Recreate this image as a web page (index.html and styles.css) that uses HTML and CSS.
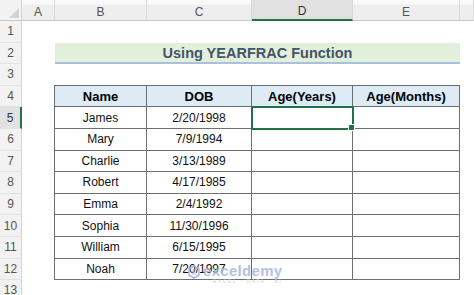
FILE: index.html
```html
<!DOCTYPE html>
<html>
<head>
<link rel="stylesheet" href="styles.css">
</head>
<body>
<div class="sheet">
    <div class="corner"><span class="tri"></span></div>
    <div class="colhead">A</div>
    <div class="colhead">B</div>
    <div class="colhead">C</div>
    <div class="colhead active">D</div>
    <div class="colhead">E</div>
    <div class="colhead"></div>

    <div class="rowhead r1">1</div>
    <div class="rowhead r2">2</div>
    <div class="rowhead r3">3</div>
    <div class="rowhead r4">4</div>
    <div class="rowhead r5 active">5</div>
    <div class="rowhead r6">6</div>
    <div class="rowhead r7">7</div>
    <div class="rowhead r8">8</div>
    <div class="rowhead r9">9</div>
    <div class="rowhead r10">10</div>
    <div class="rowhead r11">11</div>
    <div class="rowhead r12">12</div>
    <div class="rowhead r13">13</div>

    <div class="title">Using YEARFRAC Function</div>

    <div class="data">
        <div class="cell th">Name</div><div class="cell th">DOB</div><div class="cell th">Age(Years)</div><div class="cell th">Age(Months)</div>
        <div class="cell">James</div><div class="cell">2/20/1998</div><div class="cell sel"><span class="handle"></span></div><div class="cell"></div>
        <div class="cell">Mary</div><div class="cell">7/9/1994</div><div class="cell"></div><div class="cell"></div>
        <div class="cell">Charlie</div><div class="cell">3/13/1989</div><div class="cell"></div><div class="cell"></div>
        <div class="cell">Robert</div><div class="cell">4/17/1985</div><div class="cell"></div><div class="cell"></div>
        <div class="cell">Emma</div><div class="cell">2/4/1992</div><div class="cell"></div><div class="cell"></div>
        <div class="cell">Sophia</div><div class="cell">11/30/1996</div><div class="cell"></div><div class="cell"></div>
        <div class="cell">William</div><div class="cell">6/15/1995</div><div class="cell"></div><div class="cell"></div>
        <div class="cell">Noah</div><div class="cell">7/20/1997</div><div class="cell"></div><div class="cell"></div>
    </div>

    <div class="mark">
        <svg class="mark-icon" width="12" height="14" viewBox="0 0 12 14">
            <path d="M6 1 L11 4 L11 10 L6 13 L1 10 L1 4 Z" fill="none" stroke="#9fb4d6" stroke-width="1.6"/>
            <path d="M4 5 H8 M4 7 H7 M4 9 H8" stroke="#9fb4d6" stroke-width="1.2"/>
        </svg>
        <div class="mark-text">
            <div class="mark-name">exceldemy</div>
            <div class="mark-sub">EXCEL · DATA · BI</div>
        </div>
    </div>
</div>
</body>
</html>
```
FILE: styles.css
```css
body { margin: 0; background: #fff; font-family: "Liberation Sans", Arial, sans-serif; }

.sheet {
    position: relative;
    width: 474px;
    height: 295px;
    overflow: hidden;
    display: grid;
    grid-template-columns: 22px 33px 92px 105px 101px 107px 1fr;
    grid-template-rows: 21px repeat(13, 21.6px);
}

/* headers */
.corner {
    grid-column: 1; grid-row: 1;
    background: #f2f2f2;
    border-right: 1px solid #d4d4d4;
    border-bottom: 1px solid #c6c6c6;
    position: relative;
}
.corner .tri {
    position: absolute; right: 2px; bottom: 2px;
    width: 0; height: 0;
    border-left: 10px solid transparent;
    border-bottom: 10px solid #d2d2d2;
}
.colhead {
    grid-row: 1;
    background: linear-gradient(#fafafa 0, #fafafa 4px, #eeeeee 5px);
    border-right: 1px solid #dadada;
    border-bottom: 1px solid #c6c6c6;
    color: #555;
    font-size: 12px;
    display: flex; align-items: center; justify-content: center;
    padding-top: 3px;
    box-sizing: border-box;
}
.colhead.active { background: #e1e1e1; border-bottom: 2px solid #217346; color: #333; }

.rowhead {
    grid-column: 1;
    background: #f2f2f2;
    border-right: 1px solid #d4d4d4;
    border-bottom: 1px solid #e2e2e2;
    color: #555;
    font-size: 12px;
    display: flex; align-items: center; justify-content: center;
    box-sizing: border-box;
}
.rowhead.active { background: #e1e1e1; border-right: 2px solid #217346; color: #333; }
.r1 { grid-row: 2; } .r2 { grid-row: 3; } .r3 { grid-row: 4; } .r4 { grid-row: 5; }
.r5 { grid-row: 6; } .r6 { grid-row: 7; } .r7 { grid-row: 8; } .r8 { grid-row: 9; }
.r9 { grid-row: 10; } .r10 { grid-row: 11; } .r11 { grid-row: 12; } .r12 { grid-row: 13; }
.r13 { grid-row: 14; }

/* title band */
.title {
    grid-column: 3 / 7; grid-row: 3;
    background: #e2efda;
    border-bottom: 2px solid #a9c0df;
    color: #44546a;
    font-weight: bold;
    font-size: 14.5px;
    display: flex; align-items: center; justify-content: center;
    box-sizing: border-box;
    padding-top: 1px;
}

/* data table */
.data {
    grid-column: 3 / 7; grid-row: 5 / 14;
    display: grid;
    grid-template-columns: 92px 105px 101px 107px;
    grid-template-rows: repeat(9, 1fr);
    margin-top: -1px;
    border-top: 1px solid #6f6f6f;
    border-left: 1px solid #6f6f6f;
    box-sizing: border-box;
    margin-left: -1px;
}
.cell {
    border-right: 1px solid #6f6f6f;
    border-bottom: 1px solid #6f6f6f;
    display: flex; align-items: center; justify-content: center;
    font-size: 12px;
    color: #111;
}
.cell.th { background: #ddebf7; font-size: 13px; font-weight: bold; color: #000; }
.cell.sel { position: relative; outline: 2px solid #217346; outline-offset: -1px; }
.handle {
    position: absolute; right: -3px; bottom: -3px;
    width: 5px; height: 5px;
    background: #217346;
    border: 1px solid #fff;
}

/* watermark */
.mark {
    position: absolute;
    left: 188px; top: 263px;
    display: flex; align-items: flex-start; gap: 3px;
    opacity: 0.85;
}
.mark-icon { margin-top: 2px; }
.mark-name { color: #a7b9d8; font-size: 15px; font-weight: bold; line-height: 15px; letter-spacing: 0.3px; }
.mark-sub { color: #c3cbd6; font-size: 5px; letter-spacing: 1.6px; line-height: 7px; padding-left: 10px; }
```
